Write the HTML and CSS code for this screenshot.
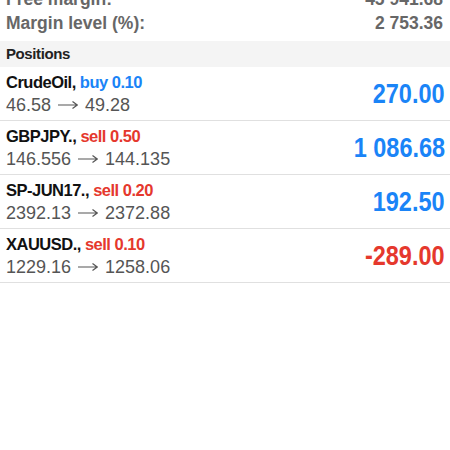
FILE: index.html
```html
<!DOCTYPE html>
<html lang="en">
<head>
    <meta charset="UTF-8">
    <meta name="viewport" content="width=device-width, initial-scale=1.0">
    <title>Trade</title>
    <link rel="stylesheet" href="styles.css">
</head>
<body>
    <div class="summary">
        <div class="summary-row">
            <span>Free margin:</span>
            <span>45 941.68</span>
        </div>
        <div class="summary-row">
            <span>Margin level (%):</span>
            <span>2 753.36</span>
        </div>
    </div>

    <div class="section-title">Positions</div>

    <div class="positions">
        <div class="position">
            <div class="info">
                <div class="symbol">CrudeOil, <span class="buy">buy 0.10</span></div>
                <div class="prices">46.58 <svg class="arrow" viewBox="0 0 20 10"><path d="M0 5H19M14.5 1.5L19.3 5L14.5 8.5"/></svg> 49.28</div>
            </div>
            <div class="profit up">270.00</div>
        </div>
        <div class="position">
            <div class="info">
                <div class="symbol">GBPJPY., <span class="sell">sell 0.50</span></div>
                <div class="prices">146.556 <svg class="arrow" viewBox="0 0 20 10"><path d="M0 5H19M14.5 1.5L19.3 5L14.5 8.5"/></svg> 144.135</div>
            </div>
            <div class="profit up">1 086.68</div>
        </div>
        <div class="position">
            <div class="info">
                <div class="symbol">SP-JUN17., <span class="sell">sell 0.20</span></div>
                <div class="prices">2392.13 <svg class="arrow" viewBox="0 0 20 10"><path d="M0 5H19M14.5 1.5L19.3 5L14.5 8.5"/></svg> 2372.88</div>
            </div>
            <div class="profit up">192.50</div>
        </div>
        <div class="position">
            <div class="info">
                <div class="symbol">XAUUSD., <span class="sell">sell 0.10</span></div>
                <div class="prices">1229.16 <svg class="arrow" viewBox="0 0 20 10"><path d="M0 5H19M14.5 1.5L19.3 5L14.5 8.5"/></svg> 1258.06</div>
            </div>
            <div class="profit down">-289.00</div>
        </div>
    </div>
</body>
</html>
```

FILE: styles.css
```css
body {
    margin: 0;
    font-family: "Liberation Sans", Arial, sans-serif;
    background-color: #fff;
    color: #111;
}
.summary {
    margin-top: -13px;
    padding: 0 7px 6px 6px;
}
.summary-row {
    display: flex;
    justify-content: space-between;
    font-size: 17.5px;
    font-weight: bold;
    line-height: 24px;
    color: #676767;
}
.section-title {
    background-color: #f4f4f4;
    padding: 0 6px;
    font-size: 15px;
    font-weight: bold;
    letter-spacing: -0.4px;
    line-height: 26px;
    color: #222;
}
.position {
    display: flex;
    align-items: center;
    justify-content: space-between;
    padding: 4px 5px 2px 6px;
    border-bottom: 1px solid #e0e0e0;
}
.symbol {
    font-size: 16.5px;
    font-weight: bold;
    letter-spacing: -0.5px;
    line-height: 22px;
}
.buy {
    color: #1a84f7;
}
.sell {
    color: #e5382d;
}
.prices {
    font-size: 18px;
    line-height: 25px;
    color: #555;
}
.arrow {
    width: 20px;
    height: 10px;
    margin: 0 2px;
    vertical-align: 1px;
    fill: none;
    stroke: #555;
    stroke-width: 1.2;
}
.profit {
    font-size: 27px;
    font-weight: bold;
    margin-bottom: 1px;
    transform: scaleX(0.87);
    transform-origin: right center;
}
.up {
    color: #1a84f7;
}
.down {
    color: #e5382d;
}
```
